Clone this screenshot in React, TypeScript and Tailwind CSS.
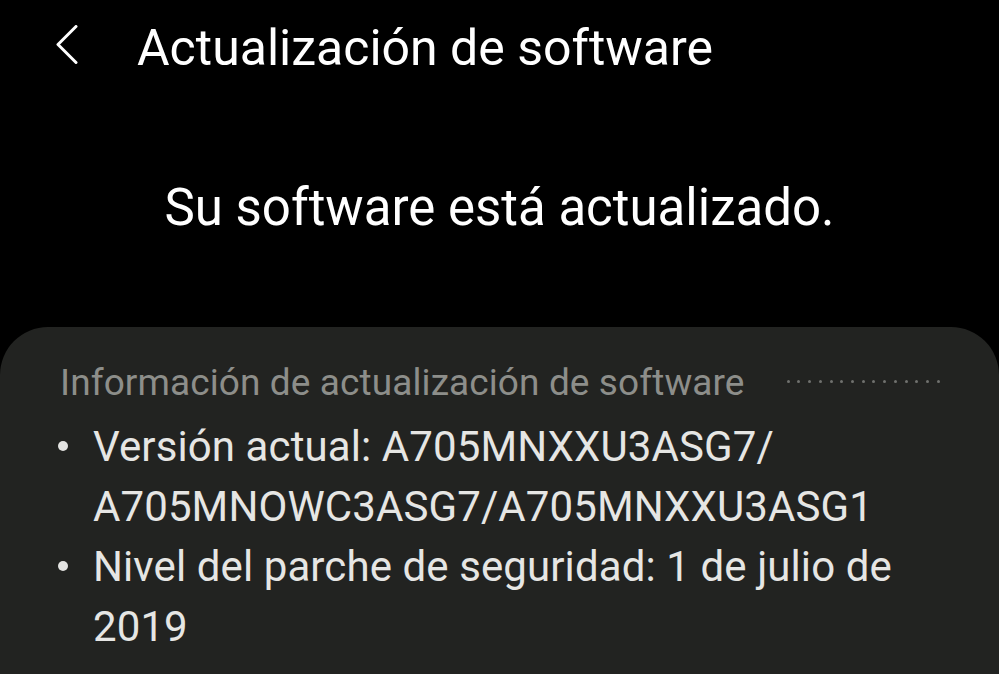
import React from 'react'

const versionLines = ['Versión actual: A705MNXXU3ASG7/', 'A705MNOWC3ASG7/A705MNXXU3ASG1']
const patchLines = ['Nivel del parche de seguridad: 1 de julio de', '2019']

function Bullet({ lines }: { lines: string[] }) {
  return (
    <div className="flex">
      <div className="w-[35px] shrink-0">
        <div className="mt-[24px] h-[10px] w-[10px] rounded-full bg-[#e4e4e2]" />
      </div>
      <div className="text-[42px] leading-[60px] text-[#e6e6e4] tracking-[0.1px]">
        {lines.map((l, i) => (
          <div key={i}>{l}</div>
        ))}
      </div>
    </div>
  )
}

export default function App() {
  return (
    <div className="min-h-screen h-[674px] overflow-hidden bg-black font-['Roboto',sans-serif] flex flex-col">
      {/* Top bar */}
      <div className="flex items-start pt-[20px]">
        <svg className="ml-[55px] mt-[5px] shrink-0" width="23" height="39" viewBox="0 0 23 39" fill="none">
          <path d="M21 1.5 L3 19.5 L21 37.5" stroke="white" strokeWidth="3" strokeLinecap="round" strokeLinejoin="round" />
        </svg>
        <h1 className="ml-[59px] text-[50px] leading-[56px] text-white font-normal">Actualización de software</h1>
      </div>

      {/* Status */}
      <p className="mt-[104px] text-center text-[51px] leading-[56px] text-white">Su software está actualizado.</p>

      {/* Info card */}
      <div className="mt-[91px] flex-1 rounded-t-[48px] bg-[#222321] pl-[58px] pr-[59px] pt-[34px]">
        <div className="flex items-center">
          <span className="ml-[2px] text-[37px] leading-[44px] text-[#8d8e8a] tracking-[0.1px]">
            Información de actualización de software
          </span>
          <div className="ml-[42px] mt-[-4px] flex flex-1 justify-between">
            {Array.from({ length: 15 }).map((_, i) => (
              <span key={i} className="h-[3px] w-[3px] rounded-full bg-[#70716e]" />
            ))}
          </div>
        </div>
        <div className="mt-[12px]">
          <Bullet lines={versionLines} />
          <Bullet lines={patchLines} />
        </div>
      </div>
    </div>
  )
}
